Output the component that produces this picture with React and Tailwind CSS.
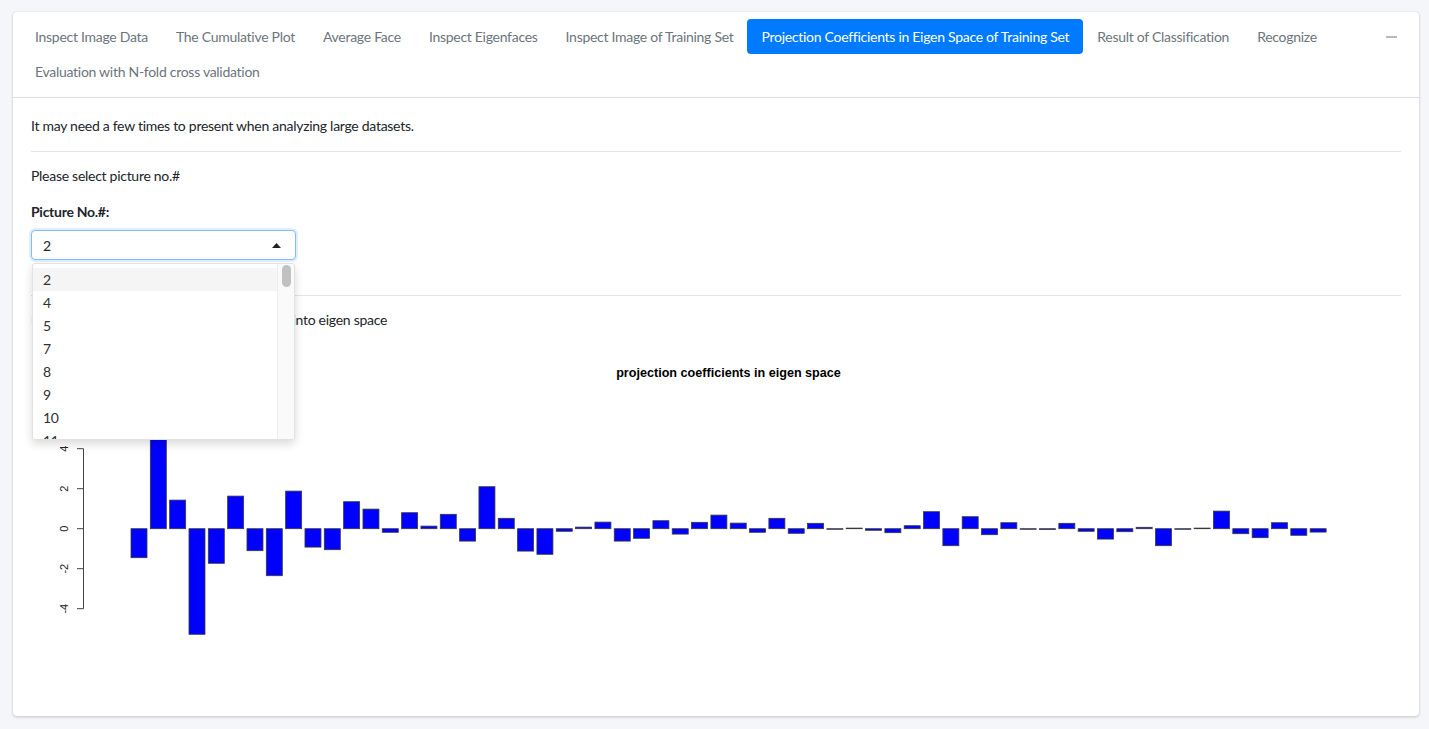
import React from 'react';

// ─── Tabs in the card header ────────────────────────────────────────────────
const TABS = [
  'Inspect Image Data',
  'The Cumulative Plot',
  'Average Face',
  'Inspect Eigenfaces',
  'Inspect Image of Training Set',
  'Projection Coefficients in Eigen Space of Training Set',
  'Result of Classification',
  'Recognize',
  'Evaluation with N-fold cross validation',
];
const ACTIVE_TAB = 'Projection Coefficients in Eigen Space of Training Set';

const PICTURE_OPTIONS = ['2', '4', '5', '7', '8', '9', '10', '11', '12', '13'];

// projection coefficients of picture #2 (read off the barplot)
const COEFS = [
  -1.45, 5.5, 1.43, -5.28, -1.73, 1.63, -1.1, -2.35, 1.88, -0.92, -1.05, 1.35,
  0.98, -0.18, 0.8, 0.13, 0.72, -0.62, 2.1, 0.52, -1.12, -1.28, -0.13, 0.08,
  0.33, -0.62, -0.48, 0.4, -0.27, 0.32, 0.68, 0.28, -0.18, 0.52, -0.23, 0.27,
  -0.03, 0, -0.08, -0.2, 0.15, 0.85, -0.85, 0.6, -0.3, 0.3, -0.02, -0.04, 0.27,
  -0.13, -0.52, -0.15, 0.07, -0.85, -0.02, 0.01, 0.88, -0.25, -0.45, 0.3,
  -0.33, -0.17,
];

function CoefPlot() {
  const zero = 188.7;
  const unit = 20;
  const ticks = [4, 2, 0, -2, -4];
  return (
    <svg width="1370" height="360" className="block tracking-normal">
      <text
        x="697.5"
        y="36.5"
        textAnchor="middle"
        fontFamily="'Liberation Sans', Arial, sans-serif"
        fontWeight="700"
        fontSize="12.6"
        fill="#000"
      >
        projection coefficients in eigen space
      </text>
      <line x1="52.5" y1={zero - 4 * unit} x2="52.5" y2={zero + 4 * unit} stroke="#444" strokeWidth="1" />
      {ticks.map((t) => {
        const y = zero - t * unit;
        return (
          <g key={t}>
            <line x1="46" y1={y} x2="52.5" y2={y} stroke="#444" strokeWidth="1" />
            <text
              x="33"
              y={y}
              transform={`rotate(-90 33 ${y})`}
              textAnchor="middle"
              dominantBaseline="central"
              fontFamily="'Liberation Sans', Arial, sans-serif"
              fontSize="11"
              fill="#222"
            >
              {t}
            </text>
          </g>
        );
      })}
      {COEFS.map((v, i) => {
        const x = 100 + i * 19.33;
        const h = Math.max(Math.abs(v) * unit, 0.6);
        const y = v >= 0 ? zero - h : zero;
        return (
          <rect key={i} x={x} y={y} width="16" height={h} fill="#0000ff" stroke="#3a3a3a" strokeWidth="0.8" />
        );
      })}
    </svg>
  );
}

function PictureSelect() {
  return (
    <div className="relative w-[265px]">
      <div className="flex h-[30px] items-center justify-between rounded-[4px] border border-[#80bdff] bg-white pl-[11px] pr-[14px] shadow-[0_0_0_2px_rgba(0,123,255,0.12)]">
        <span>2</span>
        <svg width="9" height="5" viewBox="0 0 9 5">
          <polygon points="0,5 4.5,0 9,5" fill="#222" />
        </svg>
      </div>

      {/* open dropdown */}
      <div className="absolute left-[1px] top-[33px] z-10 h-[177px] w-[263px] overflow-hidden rounded-[3px] border border-[#e2e2e2] bg-white shadow-[0_4px_10px_rgba(0,0,0,0.15)]">
        <div className="pr-[17px] pt-[4px]">
          {PICTURE_OPTIONS.map((opt, i) => (
            <div
              key={opt}
              className={`h-[23px] pl-[10px] leading-[23px] text-[#303030] ${i === 0 ? 'bg-[#f5f5f5]' : ''}`}
            >
              {opt}
            </div>
          ))}
        </div>
        <div className="absolute bottom-0 right-0 top-0 w-[17px] border-l border-[#ededed] bg-[#fafafa]">
          <div className="absolute left-[4px] top-[1px] h-[22px] w-[9px] rounded-full bg-[#c1c1c1]" />
        </div>
      </div>
    </div>
  );
}

export default function App() {
  return (
    <div
      className="min-h-screen bg-[#f4f6f9] pb-[12px] pl-[13px] pr-[10px] pt-[12px] text-[14px] tracking-[-0.28px] text-[#212529]"
      style={{ fontFamily: "Lato, 'Liberation Sans', sans-serif" }}
    >
      <div className="rounded-[4px] bg-white shadow-[0_0_1px_rgba(0,0,0,0.125),0_1px_3px_rgba(0,0,0,0.2)]">
        {/* header with nav pills */}
        <div className="flex items-start border-b border-[#dfdfdf] pb-[8px] pl-[8px] pr-[22px] pt-[7px]">
          <ul className="flex flex-1 flex-wrap">
            {TABS.map((tab) => (
              <li key={tab}>
                <a
                  className={`flex h-[35px] items-center rounded-[4px] px-[14px] ${
                    tab === ACTIVE_TAB ? 'bg-[#007bff] text-white' : 'text-[#6c757d]'
                  }`}
                >
                  {tab}
                </a>
              </li>
            ))}
          </ul>
          <button className="mt-[16px] flex h-[4px] items-center">
            <span className="block h-[2px] w-[11px] bg-[#b5bbc1]" />
          </button>
        </div>

        {/* body */}
        <div className="px-[18px] pb-[16px] pt-[16px]">
          <p className="leading-[24px]">It may need a few times to present when analyzing large datasets.</p>
          <hr className="mt-[13px] border-[#e4e4e4]" />
          <p className="mt-[12px] leading-[24px]">Please select picture no.#</p>
          <label className="mt-[12px] block font-bold leading-[24px]">Picture No.#:</label>
          <div className="mt-[6px]">
            <PictureSelect />
          </div>
          <hr className="mt-[35px] border-[#e4e4e4]" />
          <p className="mt-[12px] leading-[24px]">Projection coefficients of the image mapped into eigen space</p>
          <div className="mt-[8px]">
            <CoefPlot />
          </div>
        </div>
      </div>
    </div>
  );
}
